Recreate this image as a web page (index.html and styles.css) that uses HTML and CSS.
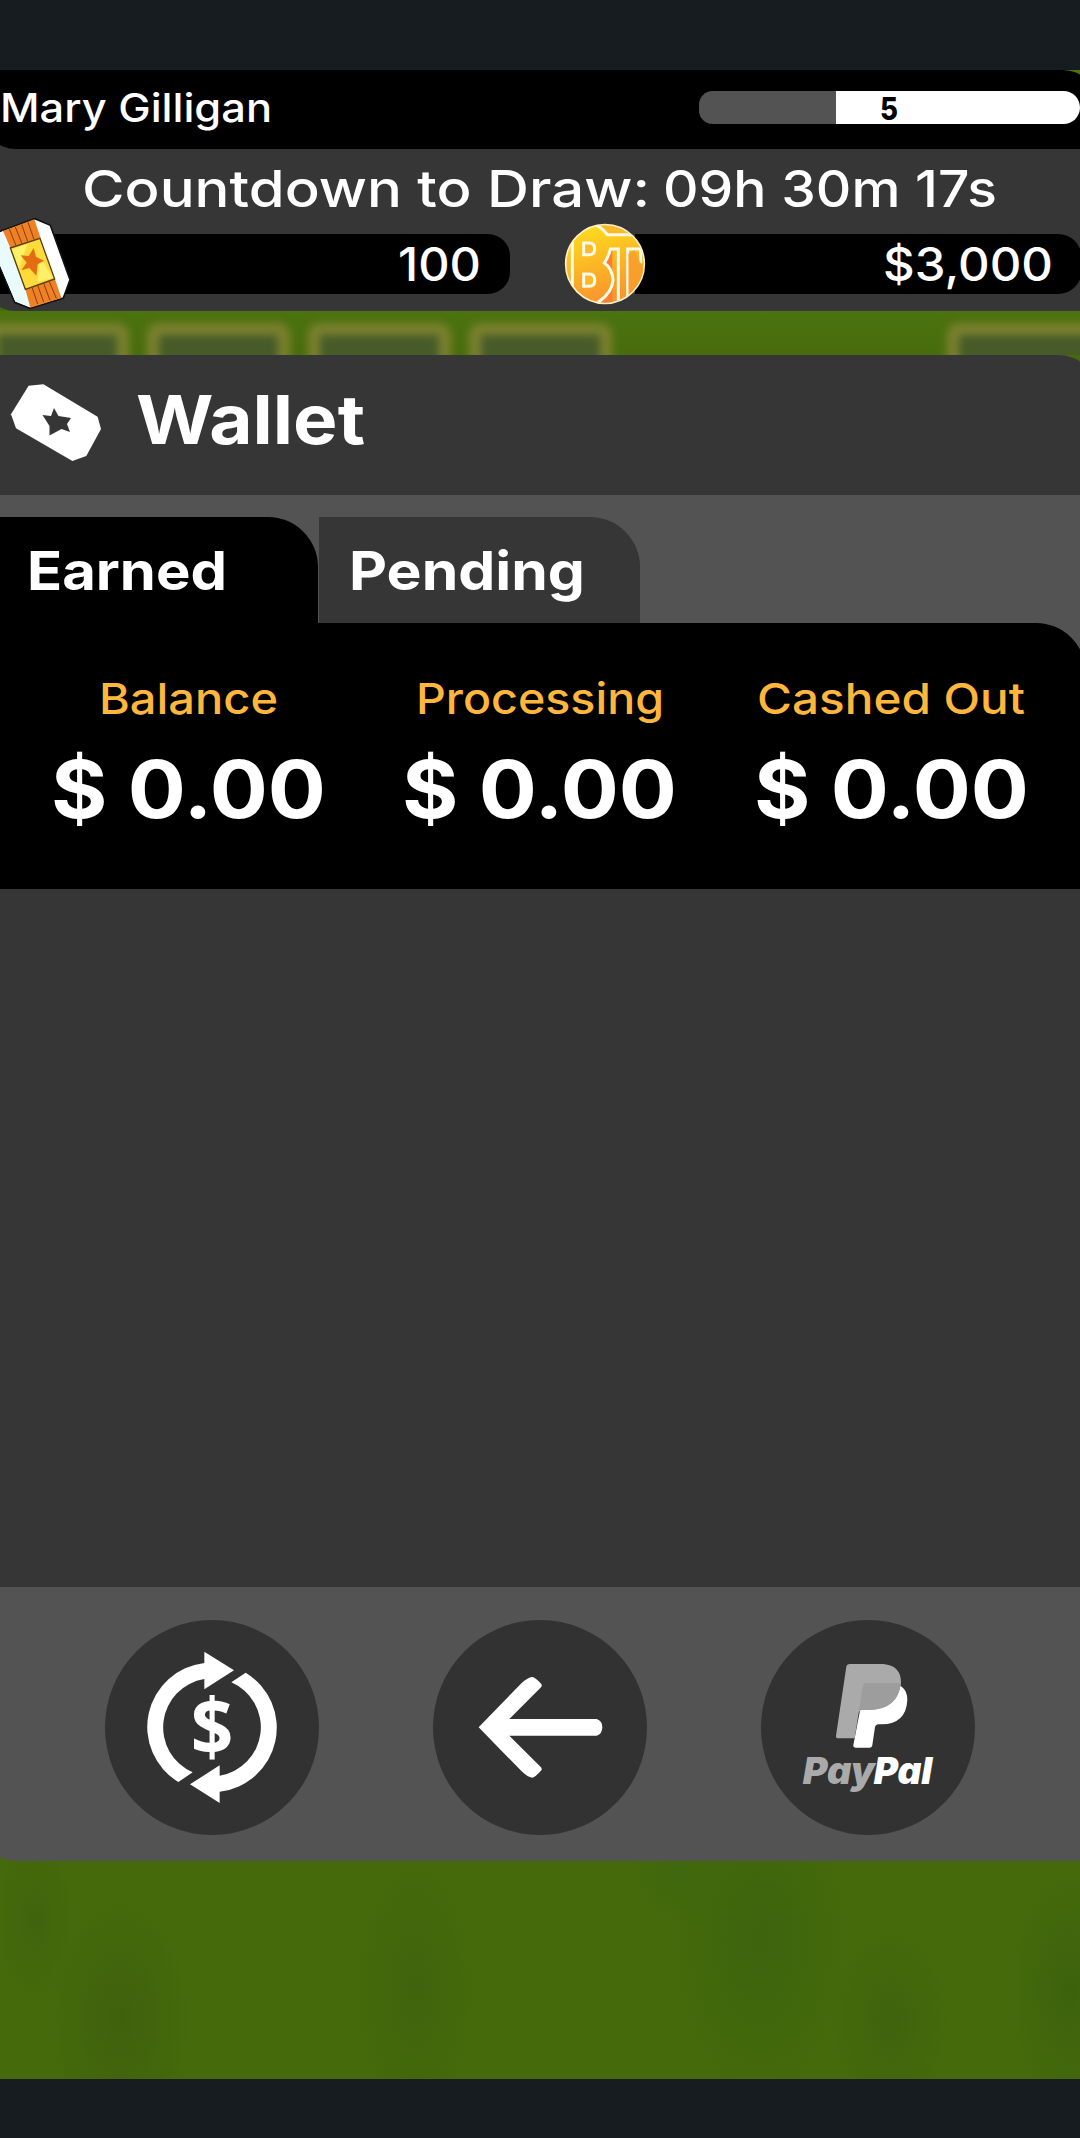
FILE: index.html
```html
<!DOCTYPE html>
<html lang="en">
<head>
<meta charset="utf-8">
<title>Wallet</title>
<link rel="stylesheet" href="styles.css">
</head>
<body>
<div class="game">
  <header class="hud">
    <div class="profile">
      <svg class="label medium" width="274" height="50"><text x="0" y="36.5" font-size="40" textLength="272" lengthAdjust="spacingAndGlyphs">Mary Gilligan</text></svg>
      <div class="level">
        <div class="level-rest"></div>
        <div class="level-fill"><svg class="label heavy dark" width="24" height="33"><text x="0" y="28.5" font-size="31" textLength="18" lengthAdjust="spacingAndGlyphs">5</text></svg></div>
      </div>
    </div>
    <div class="countdown">
      <svg class="label medium" width="568" height="60"><text x="0" y="45.5" font-size="51" textLength="568" lengthAdjust="spacingAndGlyphs">Countdown to Draw:</text></svg>
      <svg class="label medium" width="334" height="60"><text x="0" y="45.5" font-size="51" textLength="334" lengthAdjust="spacingAndGlyphs">09h 30m 17s</text></svg>
    </div>
    <div class="currencies">
      <div class="currency tickets">
        <svg class="ticket" width="72" height="96" viewBox="0 50 216 288">
          <path d="M-10 100 12 92 105 58 151 78 210 241 190 296 90 327 44 309-10 180z" fill="#fff" stroke="#111" stroke-width="5"/>
          <path d="M-8 120 8 94 75 270 90 324 46 306-8 180z" fill="#e9fbfd"/>
          <path d="M9 95 103 60 122 117 31 146zM76 270 165 239 184 296 91 325z" fill="#ee8124"/>
          <path d="M28 89 48 139M46 83 66 133M65 76 83 126M84 69 102 120M96 264 113 314M113 258 131 308M131 252 150 303M148 247 169 297" stroke="#8a3a10" stroke-width="3"/>
          <path d="M31 146 120 117 164 239 76 270z" fill="#ffda3b" stroke="#57400c" stroke-width="4"/>
          <path d="M36 149 82 134 57 205zM119 172 159 236 113 247z" fill="#fff06a"/>
          <path d="M101 146 108 172 132 184 113 195 109 229 88 206 64 213 80 190 62 168 86 170z" fill="#e46d13"/>
        </svg>
        <svg class="label medium" width="83" height="60"><text x="-1" y="47" font-size="46" textLength="83" lengthAdjust="spacingAndGlyphs">100</text></svg>
      </div>
      <div class="currency cash">
        <svg class="coin" width="82" height="82" viewBox="42 37 246 246">
          <defs>
            <linearGradient id="gold" x1="0" y1="0" x2="0.25" y2="1"><stop offset="0" stop-color="#ffe11b"/><stop offset="1" stop-color="#f9962e"/></linearGradient>
            <clipPath id="disc"><circle cx="165" cy="160" r="116"/></clipPath>
          </defs>
          <circle cx="165" cy="160" r="118" fill="url(#gold)" stroke="#fff1c4" stroke-width="5"/>
          <g clip-path="url(#disc)">
            <path d="M146 50 175 72 240 72 290 120 290 20 130 20z" fill="#f9b928"/>
            <path d="M130 40Q154 47 172 72H275" fill="none" stroke="#fffbe6" stroke-width="9"/>
            <path d="M67 85V245" stroke="#fffbe6" stroke-width="9"/>
            <path d="M187 116V282L150 274Q188 245 190 205Q185 170 165 160Q174 148 180 116z" fill="#f77f32"/>
            <path d="M144 275Q187 247 189 207Q186 172 163 157Q177 136 181 115H205V290M233 290V115H272V158" fill="none" stroke="#fffbe6" stroke-width="9"/>
            <path d="M253 118 292 200 235 270V130z" fill="#f99c2c" opacity=".8"/>
            <path d="M101 97H118Q134 97 134 115Q134 132 118 132H101zM101 190H118Q134 190 134 209Q134 227 118 227H101z" fill="#fbb92b" stroke="#fffbe6" stroke-width="9"/>
          </g>
        </svg>
        <svg class="label medium" width="170" height="60"><text x="-1" y="47" font-size="46" textLength="170" lengthAdjust="spacingAndGlyphs">$3,000</text></svg>
      </div>
    </div>
  </header>

  <div class="field">
    <i class="plot"></i><i class="plot"></i><i class="plot"></i><i class="plot"></i><i class="plot far"></i>
  </div>

  <main class="panel">
    <div class="title">
      <svg class="title-icon" width="94" height="80" viewBox="10 383 94 80">
        <path fill="#fff" d="M28.6 385.7 43.4 384.3 97.6 416.7 101 429 86.3 456 72.4 461 16 428.3 11 414.3z"/>
        <path fill="#363636" d="M54 408 58.5 416 71 418 67 424 70 432 61.5 429 49.5 435.5 49.5 426 42.5 415 51 416z"/>
      </svg>
      <svg class="label bold" width="230" height="80"><text x="0" y="61" font-size="68" textLength="229" lengthAdjust="spacingAndGlyphs">Wallet</text></svg>
    </div>
    <nav class="tabs">
      <div class="tab active"><svg class="label bold" width="200" height="70"><text x="0" y="48.5" font-size="54" textLength="200" lengthAdjust="spacingAndGlyphs">Earned</text></svg></div>
      <div class="tab"><svg class="label bold" width="236" height="70"><text x="0" y="48.5" font-size="54" textLength="236" lengthAdjust="spacingAndGlyphs">Pending</text></svg></div>
    </nav>
    <section class="totals">
      <div class="total">
        <svg class="label medium amber" width="180" height="60"><text x="0" y="45" font-size="43" textLength="179" lengthAdjust="spacingAndGlyphs">Balance</text></svg>
        <svg class="label bold" width="276" height="90"><text x="0" y="75" font-size="80" textLength="275" lengthAdjust="spacingAndGlyphs">$ 0.00</text></svg>
      </div>
      <div class="total">
        <svg class="label medium amber" width="249" height="60"><text x="0" y="45" font-size="43" textLength="248" lengthAdjust="spacingAndGlyphs">Processing</text></svg>
        <svg class="label bold" width="276" height="90"><text x="0" y="75" font-size="80" textLength="275" lengthAdjust="spacingAndGlyphs">$ 0.00</text></svg>
      </div>
      <div class="total">
        <svg class="label medium amber" width="270" height="60"><text x="0" y="45" font-size="43" textLength="268" lengthAdjust="spacingAndGlyphs">Cashed Out</text></svg>
        <svg class="label bold" width="276" height="90"><text x="0" y="75" font-size="80" textLength="275" lengthAdjust="spacingAndGlyphs">$ 0.00</text></svg>
      </div>
    </section>
    <div class="history"></div>
    <footer class="actions">
      <div class="action">
        <svg viewBox="45 120 642 645">
          <g id="half" fill="#fff"><path d="M343 249A193 193 0 0 0 265 606L308 577A147 147 0 0 1 343 297V328L432 271 343 215z"/></g>
          <use href="#half" transform="rotate(180 366 442)"/>
          <text class="dollar" x="302" y="526" font-size="238" textLength="128" lengthAdjust="spacingAndGlyphs">$</text>
        </svg>
      </div>
      <div class="action">
        <svg viewBox="39 120 642 645">
          <path fill="#fff" d="M176 442 302 312Q322 292 337 291Q346 292 364 312Q367 318 363 322L268 417H530Q547 422 547 442Q547 462 530 467H268L363 562Q367 567 364 571Q346 592 337 593Q322 592 302 571z"/>
        </svg>
      </div>
      <div class="action">
        <svg viewBox="63 120 642 645">
          <path fill="#fff" d="M376 310H470L485 320Q502 332 502 360Q498 432 425 433H414Q407 433 405 441L397 495Q396 503 388 503H348Q339 503 340 495z"/>
          <path fill="#aaa" d="M330 252H430Q483 257 483 307Q474 390 385 390H368Q358 390 356 398L344 475H295Q287 475 288 467L319 260Q320 252 330 252z"/>
          <path fill="#9d9d9d" d="M380 309H483Q474 390 385 390H357L368 320Q370 309 380 309z"/>
          <g class="wordmark" font-size="112"><text x="188" y="613" fill="#aaa" textLength="216" lengthAdjust="spacingAndGlyphs">Pay</text><text x="401" y="613" fill="#fff" textLength="176" lengthAdjust="spacingAndGlyphs">Pal</text></g>
        </svg>
      </div>
    </footer>
  </main>
</div>
</body>
</html>
```
FILE: styles.css
```css
* { box-sizing: border-box; }

body {
  margin: 0;
  background: #171c20;
  font-family: Inter, "Open Sans", sans-serif;
}

.game {
  width: 1080px;
  height: 2009px;
  margin: 70px 0 59px;
  overflow: hidden;
  display: flex;
  flex-direction: column;
  background:
    radial-gradient(ellipse 70px 120px at 120px 1950px, #3f610d, transparent),
    radial-gradient(ellipse 60px 130px at 415px 1920px, #3f640d, transparent),
    radial-gradient(ellipse 90px 160px at 760px 1870px, #3e640e, transparent),
    radial-gradient(ellipse 50px 60px at 680px 1800px, #3f670d, transparent),
    radial-gradient(ellipse 60px 90px at 890px 1950px, #3f630d, transparent),
    radial-gradient(ellipse 40px 80px at 35px 1850px, #40640d, transparent),
    radial-gradient(ellipse 60px 120px at 1070px 1920px, #3d620e, transparent),
    #446a0b;
}

.label { display: block; flex: none; overflow: visible; fill: #fff; }
.medium { font-weight: 500; }
.bold { font-weight: 700; }
.heavy { font-weight: 800; }
.dark { fill: #000; }
.amber { fill: #ffb63c; }

/* top status area */
.hud {
  flex: none;
  height: 241px;
  margin-left: -18px;
  padding-left: 18px;
  background: linear-gradient(#4b7310 0 40px, #363636 40px);
  border-bottom-left-radius: 34px;
}

.profile {
  height: 79px;
  margin: 0 -17px 0 -18px;
  padding: 15px 17px 0 18px;
  display: flex;
  justify-content: space-between;
  background: #000;
  border-radius: 0 34px 0 34px;
}

.level { display: flex; width: 381px; height: 33px; margin-top: 6px; border-radius: 14px 17px 17px 14px; overflow: hidden; }
.level-rest { width: 137px; background: #535353; }
.level-fill { flex: 1; padding-left: 44px; background: #fff; }

.countdown { display: flex; gap: 13px; height: 85px; padding: 12px 0 0 82px; }

.currencies { display: flex; gap: 85px; height: 60px; }

.currency { flex: none; display: flex; align-items: center; justify-content: space-between; height: 60px; }
.tickets { width: 510px; padding-right: 28px; background: #000; border-radius: 0 22px 22px 0; }
.cash { width: 487px; padding-right: 28px; background: linear-gradient(90deg, transparent 40px, #000 40px); border-radius: 0 24px 24px 0; }
.ticket, .coin { flex: none; display: block; overflow: hidden; }
.ticket { margin-top: -1px; }
.coin { margin-left: -31px; }

/* blurred garden plots */
.field {
  flex: none;
  height: 44px;
  display: flex;
  gap: 18px;
  padding-top: 12px;
  margin-left: -14px;
  background: linear-gradient(#4b7310, #486c0c);
  overflow: hidden;
}
.plot { flex: none; width: 143px; height: 100px; background: #465b28; border: 12px solid #7c812e; border-radius: 12px; filter: blur(4px); }
.far { width: 200px; margin-left: 317px; }

/* wallet panel */
.panel {
  flex: none;
  height: 1506px;
  margin: 0 -18px;
  padding: 0 18px;
  display: flex;
  flex-direction: column;
  background: #535353;
  border-radius: 0 40px 0 34px;
}

.title {
  flex: none;
  height: 140px;
  margin-right: -18px;
  padding: 28px 0 0 10px;
  display: flex;
  gap: 32px;
  background: #363636;
  border-top-right-radius: 40px;
}

.tabs { flex: none; display: flex; gap: 1px; height: 128px; padding-top: 22px; }
.tab { width: 321px; padding: 24px 0 0 30px; background: #363636; border-top-right-radius: 50px; }
.active { width: 318px; padding-left: 27px; background: #000; }

.totals { flex: none; height: 266px; display: flex; margin-right: -6px; padding: 46px 0 0 13px; background: #000; border-top-right-radius: 50px; }
.total { width: 351.5px; display: flex; flex-direction: column; align-items: center; gap: 14px; }

.history { flex: 1; background: #363636; }

.actions { flex: none; height: 274px; padding: 33px 105px 0; display: flex; gap: 114px; }
.action { width: 214px; height: 215px; border-radius: 50%; background: #323232; }
.action svg { display: block; width: 214px; height: 215px; }
.dollar { font-family: "Open Sans", sans-serif; font-weight: 700; fill: #fff; }
.wordmark { font-weight: 900; font-style: italic; }
```
